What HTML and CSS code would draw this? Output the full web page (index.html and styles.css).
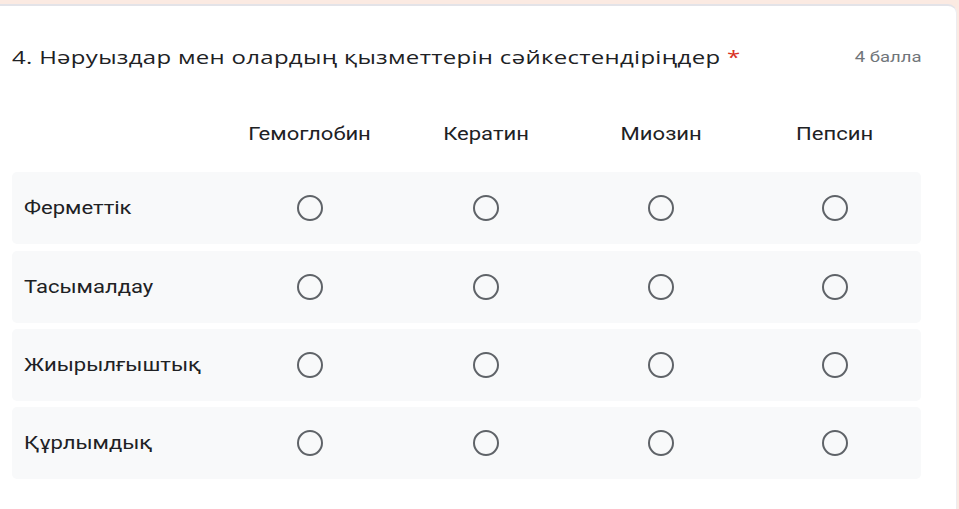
FILE: index.html
```html
<!DOCTYPE html>
<html lang="kk">
<head>
<meta charset="utf-8">
<link rel="stylesheet" href="styles.css">
</head>
<body>
<div class="page">
  <div class="card">
    <div class="title-row">
      <div class="title"><span class="wide">4. Нәруыздар мен олардың қызметтерін сәйкестендіріңдер <span class="req">*</span></span></div>
      <div class="points"><span class="wide-r">4 балла</span></div>
    </div>
    <div class="grid">
      <div class="head">
        <div class="lbl"></div>
        <div class="col"><span class="wide-c">Гемоглобин</span></div>
        <div class="col"><span class="wide-c">Кератин</span></div>
        <div class="col"><span class="wide-c">Миозин</span></div>
        <div class="col"><span class="wide-c">Пепсин</span></div>
      </div>
      <div class="row">
        <div class="lbl"><span class="wide">Ферметтік</span></div>
        <div class="col"><span class="radio"></span></div>
        <div class="col"><span class="radio"></span></div>
        <div class="col"><span class="radio"></span></div>
        <div class="col"><span class="radio"></span></div>
      </div>
      <div class="row">
        <div class="lbl"><span class="wide">Тасымалдау</span></div>
        <div class="col"><span class="radio"></span></div>
        <div class="col"><span class="radio"></span></div>
        <div class="col"><span class="radio"></span></div>
        <div class="col"><span class="radio"></span></div>
      </div>
      <div class="row">
        <div class="lbl"><span class="wide">Жиырылғыштық</span></div>
        <div class="col"><span class="radio"></span></div>
        <div class="col"><span class="radio"></span></div>
        <div class="col"><span class="radio"></span></div>
        <div class="col"><span class="radio"></span></div>
      </div>
      <div class="row">
        <div class="lbl"><span class="wide">Құрлымдық</span></div>
        <div class="col"><span class="radio"></span></div>
        <div class="col"><span class="radio"></span></div>
        <div class="col"><span class="radio"></span></div>
        <div class="col"><span class="radio"></span></div>
      </div>
    </div>
  </div>
</div>
</body>
</html>
```
FILE: styles.css
```css
html, body {
  margin: 0;
  padding: 0;
}
body {
  background: #fbeae2;
  font-family: Roboto, "Noto Sans", sans-serif;
  color: #202124;
  width: 959px;
  height: 509px;
  overflow: hidden;
}
.page {
  padding-top: 4px;
  padding-right: 2px;
}
.card {
  background: #ffffff;
  border-top: 2px solid #e3e3e8;
  border-right: 1px solid #ececf0;
  border-top-right-radius: 9px;
  height: 503px;
  padding: 0 35px 0 12px;
}
.wide, .wide-c, .wide-r {
  display: inline-block;
  white-space: nowrap;
  transform: scaleX(1.26);
  transform-origin: left center;
}
.wide-c {
  transform-origin: center center;
}
.wide-r {
  transform: scaleX(1.32);
  transform-origin: right center;
}
.title-row {
  display: flex;
  align-items: center;
  justify-content: space-between;
  padding-top: 39px;
  height: 24px;
}
.title {
  font-family: "Open Sans", Roboto, sans-serif;
  font-size: 19px;
  letter-spacing: 0.25px;
  color: #202124;
}
.req {
  color: #d93025;
}
.points {
  font-size: 14px;
  color: #70757a;
  margin-right: -1px;
}
.grid {
  margin-top: 33px;
  display: flex;
  flex-direction: column;
  gap: 6.3px;
}
.head, .row {
  display: grid;
  grid-template-columns: 210px 176px 176px 174px 174px;
  align-items: center;
}
.head {
  height: 64px;
  font-size: 17.5px;
}
.head .col {
  text-align: center;
}
.row {
  height: 72px;
  background: #f8f9fa;
  border-radius: 5px;
  font-size: 17.5px;
}
.row .lbl {
  padding-left: 12px;
}
.col {
  display: flex;
  justify-content: center;
}
.radio {
  width: 22px;
  height: 22px;
  border: 2.5px solid #5f6368;
  border-radius: 50%;
}
```
